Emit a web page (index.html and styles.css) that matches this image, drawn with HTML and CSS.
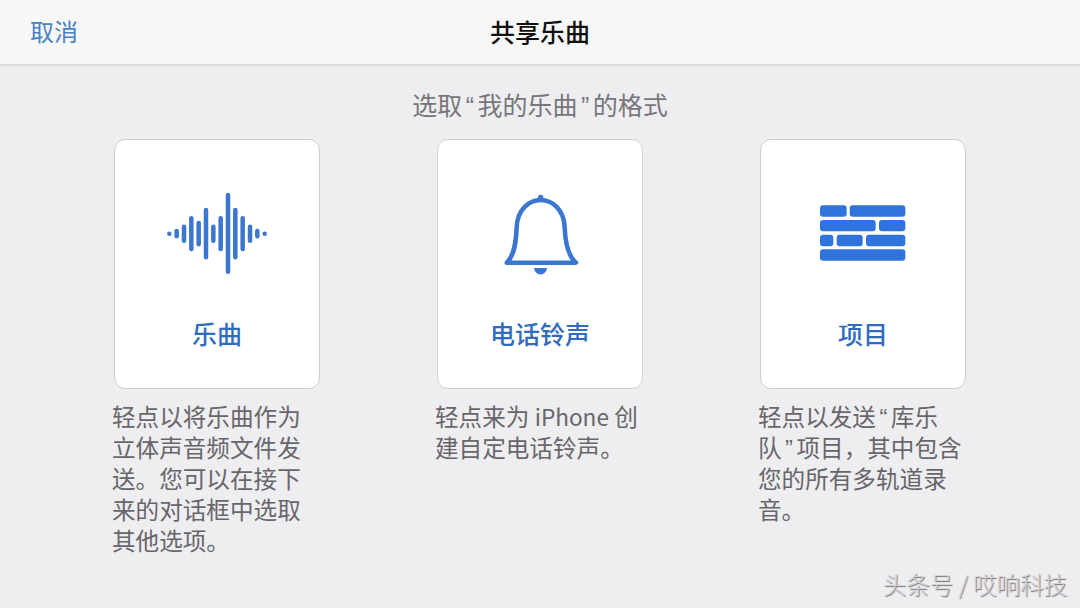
FILE: index.html
```html
<!DOCTYPE html>
<html lang="zh-CN">
<head>
<meta charset="utf-8">
<title>共享乐曲</title>
<link rel="stylesheet" href="styles.css">
</head>
<body>
<header class="nav">
  <span class="cancel">取消</span>
  <h1 class="title">共享乐曲</h1>
</header>
<main class="content">
  <p class="prompt">选取<span class="q">“</span>我的乐曲<span class="q">”</span>的格式</p>
  <div class="options">
    <section class="option">
      <div class="card">
        <div class="icon-box">
          <svg class="icon" width="130" height="100" viewBox="6 -6 390 300" fill="none" stroke="#3b76cf" stroke-width="13.5" stroke-linecap="round">
            <path d="M58 158h.1M80 150v16M102 137v42M124 112v92M146 126v64M168 87v142M190 137v42M212 112v92M234 42v230M256 87v142M278 112v92M300 137v42M322 150v16M344 158h.1"/>
          </svg>
        </div>
        <div class="label">乐曲</div>
      </div>
      <p class="desc">轻点以将乐曲作为<br>立体声音频文件发<br>送。您可以在接下<br>来的对话框中选取<br>其他选项。</p>
    </section>
    <section class="option">
      <div class="card">
        <div class="icon-box">
          <svg class="icon" width="100" height="100" viewBox="0 -5 300 300" fill="none">
            <path d="M50 246C72 226 78 190 80 140C82 86 118 58 152 58C186 58 222 86 224 140C226 190 234 226 258 246Z" stroke="#3b76cf" stroke-width="13.5" stroke-linejoin="round"/>
            <path d="M152 50v6" stroke="#3b76cf" stroke-width="16" stroke-linecap="round"/>
            <path d="M132 262H171C168 288 135 288 132 262Z" fill="#3b76cf"/>
          </svg>
        </div>
        <div class="label">电话铃声</div>
      </div>
      <p class="desc">轻点来为 <span class="latin">iPhone</span> 创<br>建自定电话铃声。</p>
    </section>
    <section class="option">
      <div class="card">
        <div class="icon-box">
          <svg class="icon" width="105" height="75" viewBox="3 -11 315 225" fill="#2f73df">
            <rect x="30" y="32" width="80" height="34" rx="9"/>
            <rect x="119" y="32" width="167" height="34" rx="9"/>
            <rect x="30" y="76" width="167" height="34" rx="9"/>
            <rect x="207" y="76" width="79" height="34" rx="9"/>
            <rect x="30" y="120" width="40" height="35" rx="9"/>
            <rect x="80" y="120" width="78" height="35" rx="9"/>
            <rect x="168" y="120" width="118" height="35" rx="9"/>
            <rect x="30" y="164" width="256" height="34" rx="9"/>
          </svg>
        </div>
        <div class="label">项目</div>
      </div>
      <p class="desc">轻点以发送<span class="q">“</span>库乐<br>队<span class="q">”</span>项目，其中包含<br>您的所有多轨道录<br>音。</p>
    </section>
  </div>
</main>
<div class="watermark">头条号 / 哎响科技</div>
</body>
</html>
```
FILE: styles.css
```css
* { box-sizing: border-box; }
html, body { margin: 0; height: 100%; }
body {
  width: 1080px;
  height: 608px;
  overflow: hidden;
  position: relative;
  background: #eeedf0;
  font-family: "Noto Sans CJK SC", "Liberation Sans", sans-serif;
}
.nav {
  height: 66px;
  background: #f7f7f8;
  border-bottom: 2px solid #dcdcde;
  display: flex;
  align-items: center;
  justify-content: center;
  position: relative;
}
.cancel {
  position: absolute;
  left: 30px;
  top: 15px;
  font-size: 24px;
  line-height: 32px;
  color: #4a82c3;
}
.title {
  margin: -2px 0 0;
  font-size: 25px;
  line-height: 32px;
  font-weight: 500;
  color: #111;
}
.content { padding-top: 22px; }
.prompt {
  margin: 0;
  text-align: center;
  font-size: 25px;
  line-height: 32px;
  color: #77767b;
}
.q {
  font-family: "Liberation Sans", sans-serif;
  line-height: 0;
  margin: 0 3.5px;
}
.latin { font-size: 22.6px; }
.options {
  display: flex;
  justify-content: center;
  gap: 117px;
  margin-top: 19px;
}
.option { width: 206px; }
.card {
  height: 250px;
  background: #fff;
  border: 1px solid #cfced2;
  border-radius: 11px;
  display: flex;
  flex-direction: column;
  align-items: center;
}
.icon-box {
  height: 177px;
  display: flex;
  align-items: center;
  justify-content: center;
}
.icon { display: block; }
.label {
  font-size: 25px;
  line-height: 32px;
  font-weight: 500;
  color: #2f6cbd;
}
.desc {
  margin: 12px 0 0 -2px;
  width: 220px;
  font-size: 23.6px;
  line-height: 31px;
  color: #67666b;
}
.watermark {
  position: absolute;
  right: 13px;
  bottom: 9px;
  font-size: 23.5px;
  line-height: 30px;
  font-weight: 300;
  color: #d4d3d6;
  text-shadow: 1px 1px 1px #6f6e72;
}
```
